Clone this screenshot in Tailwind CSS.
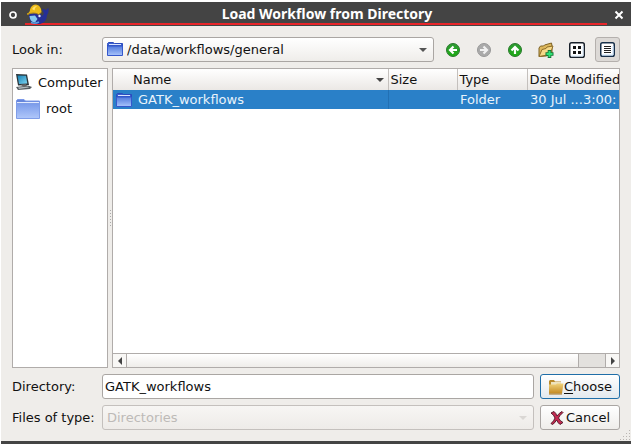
<!DOCTYPE html>
<html lang="en">
<head>
<meta charset="utf-8">
<title>Load Workflow from Directory</title>
<script src="https://cdn.jsdelivr.net/npm/@tailwindcss/browser@4"></script>
</head>
<body class="h-screen overflow-hidden bg-white px-px pt-0.5 pb-px font-['DejaVu_Sans',sans-serif] text-[13px] leading-4 text-[#111111]">
<svg class="absolute size-0" aria-hidden="true">
  <defs>
    <linearGradient id="blue" x1="0" y1="0" x2="0" y2="1"><stop offset="0" stop-color="#4f78dc"/><stop offset="1" stop-color="#a9c4fb"/></linearGradient>
    <linearGradient id="pale" x1="0" y1="0" x2="0" y2="1"><stop offset="0" stop-color="#7b9bea"/><stop offset="1" stop-color="#b0c7fa"/></linearGradient>
    <linearGradient id="green" x1="0" y1="0" x2="0" y2="1"><stop offset="0" stop-color="#2f9a35"/><stop offset="1" stop-color="#1cab12"/></linearGradient>
    <linearGradient id="gold" x1="0" y1="0" x2="0" y2="1"><stop offset="0" stop-color="#f0d27c"/><stop offset="1" stop-color="#c48a22"/></linearGradient>
    <linearGradient id="screen" x1="0" y1="0" x2="1" y2="1"><stop offset="0" stop-color="#1680b4"/><stop offset="1" stop-color="#7fd6f2"/></linearGradient>
    <symbol id="folder" viewBox="0 0 16 14"><path d="M.5 2.500V1.500L1.500.5H6L7.500 1.500H15.500V4H.5Z" fill="#3a5fd0" stroke="#2b4bbd"/><path d="M2 2.500H14" stroke="#d9e4ff"/><path d="M.5 4H15.500V13.500H.5Z" fill="url(#blue)" stroke="#3558cc"/></symbol>
  </defs>
</svg>
<main class="relative flex h-full flex-col border-b-[3px] border-[#444444] bg-[#efedea]">
  <header class="flex h-6 shrink-0 items-stretch bg-[#444444] text-white">
    <button class="flex w-6 items-center justify-center pt-0.5" aria-label="Window menu"><svg class="size-2.5" viewBox="0 0 10 10"><circle cx="5" cy="5" r="3" fill="none" stroke="#fff" stroke-width="1.700"/></svg></button>
    <div class="relative mb-px flex flex-1 items-center justify-center border-b-2 border-[#e8262a]">
      <svg class="absolute top-0.5 left-0.5 h-5 w-[22px]" viewBox="0 0 22 20"><path d="M2 9Q1 19 9 20H13Q20 18 20 11Q22 9 21.500 4Q20 4 19 6.500Q17 4 15.500 5Q15 7 17 9.500L15 12L13 9Z" fill="#252f96"/><path d="M2.500 12L8 11.500L10.500 15L8 18.500Q3 18 2.500 12Z" fill="#86c8ee"/><path d="M4 18.500Q8 20 12 18" fill="none" stroke="#5a9fdc" stroke-width="1.500"/><path d="M0 9.500Q3 8.500 3 5.500Q4.500.5 9 .5Q14 1 14.500 8L12 10.500Q7 8 0 11Z" fill="#ecba18"/><path d="M5 5Q7 1.500 10 2Q7.500 3.500 7.500 6.500Z" fill="#ffe26d"/><path d="M0 10.500Q7 7.500 11.500 10.500L14.500 8.500" fill="none" stroke="#95741a" stroke-width=".8"/><circle cx="12.500" cy="12" r="1.200" fill="#e6eefb"/></svg>
      <h1 class="pt-0.5 pl-[22px] font-['Noto_Sans',sans-serif] text-[14px] leading-4 font-bold">Load Workflow from Directory</h1>
    </div>
    <button class="flex w-6 items-center justify-center pt-0.5" aria-label="Close"><svg class="size-2.5" viewBox="0 0 10 10"><path d="M1.500 1.500L8.500 8.500M8.500 1.500L1.500 8.500" stroke="#fff" stroke-width="2"/></svg></button>
  </header>

  <div class="flex min-h-0 flex-1 flex-col gap-1.5 p-[11px]">
    <div class="flex h-[25px] shrink-0 items-center">
      <label for="look" class="w-[90px] shrink-0">Look in:</label>
      <div class="relative h-full flex-1">
        <select id="look" class="h-full w-full appearance-none rounded-[3px] border border-[#aaa6a3] bg-linear-to-b from-white to-[#efedea] pl-6"><option>/data/workflows/general</option></select>
        <svg class="pointer-events-none absolute top-[5px] left-[5px] h-3.5 w-4"><use href="#folder"/></svg>
        <svg class="pointer-events-none absolute top-[11px] right-[7px] h-1 w-2" viewBox="0 0 8 4"><path d="M0 0H8L4 4Z" fill="#555"/></svg>
      </div>
      <div class="ml-1.5 flex gap-1.5">
        <button class="flex size-[25px] items-center justify-center" aria-label="Back"><svg class="size-3.5" viewBox="0 0 14 14"><circle cx="7" cy="7" r="6.500" fill="url(#green)" stroke="#2b7a2e"/><path d="M7.500 3.500L4 7L7.500 10.500M4 7H11" fill="none" stroke="#fff" stroke-width="2.200"/></svg></button>
        <button class="flex size-[25px] items-center justify-center" aria-label="Forward"><svg class="size-3.5" viewBox="0 0 14 14"><circle cx="7" cy="7" r="6.500" fill="#aaa" stroke="#989898"/><path d="M6.500 3.500L10 7L6.500 10.500M10 7H3" fill="none" stroke="#f1f1f1" stroke-width="2.200"/></svg></button>
        <button class="flex size-[25px] items-center justify-center" aria-label="Parent directory"><svg class="size-3.5" viewBox="0 0 14 14"><circle cx="7" cy="7" r="6.500" fill="url(#green)" stroke="#2b7a2e"/><path d="M3.500 7.500L7 4L10.500 7.500M7 4V11" fill="none" stroke="#fff" stroke-width="2.200"/></svg></button>
        <button class="flex size-[25px] items-center justify-center" aria-label="Create new folder"><svg class="size-4" viewBox="0 0 16 16"><path d="M1 14.500L1 6L2.500 4H5.500L6.500 3L13.500 1L14 4V12L8 14Z" fill="#dcb65c" stroke="#7d6224"/><path d="M1 14.500L4 7.500L8 6.500L9 5L15 4L12 12.500Z" fill="#f5d888" stroke="#8d6d27"/><path d="M11.500 8V16M7.500 12H15.500" stroke="#147635" stroke-width="3.600"/><path d="M11.500 9V15M8.500 12H14.500" stroke="#2fe176" stroke-width="2"/></svg></button>
        <button class="flex size-[25px] items-center justify-center" aria-label="List view"><svg class="size-4" viewBox="0 0 16 16"><rect x=".75" y=".75" width="14.500" height="14.500" rx="1.800" fill="#fff" stroke="#18202a" stroke-width="1.500"/><path d="M2 14H14V4" fill="none" stroke="#d4e8fa"/><path d="M4 4H7V7H4ZM9 4H12V7H9ZM4 9H7V12H4ZM9 9H12V12H9Z" fill="#151515"/></svg></button>
        <button class="flex size-[25px] items-center justify-center rounded-[3px] border border-[#b4b0ad] bg-[#dcd9d6]" aria-label="Detail view" aria-pressed="true"><svg class="size-[15px]" viewBox="0 0 15 15"><rect x=".75" y=".75" width="13.500" height="13.500" rx="1.800" fill="#fff" stroke="#18304a" stroke-width="1.500"/><path d="M2 13H13V4" fill="none" stroke="#c4dffa"/><path d="M4 4.500H11M4 6.500H11M4 8.500H11M4 10.500H11" stroke="#222"/></svg></button>
      </div>
    </div>

    <div class="flex min-h-0 flex-1">
      <nav class="w-24 shrink-0 overflow-hidden border border-[#b0acaa] bg-white pt-0.5">
        <a href="#" class="flex h-[22px] items-center gap-1.5 pl-0.5"><svg class="h-4 w-[17px] shrink-0" viewBox="0 0 17 16"><path d="M1 0L12 .5L14 11L3 11.500Z" fill="#2a3338"/><path d="M2.500 1.500L11 1.800L12.300 9.500L4 10Z" fill="url(#screen)"/><path d="M6 10.500L11 10L12 12H7Z" fill="#666"/><path d="M1 13L13 11.500L17 13L15 15L3 16Z" fill="#555c60"/><path d="M3 13.500L13 12.500L14 13.500L4 15Z" fill="#b0b8bc"/></svg><span class="pt-px">Computer</span></a>
        <a href="#" class="mt-0.5 flex h-7 items-center gap-1.5 pl-[3px]"><svg class="h-5 w-6 shrink-0" viewBox="0 0 24 20"><path d="M.5 5V1.500L1.500.5H8L9.500 2H23.500V5Z" fill="#6686dc" stroke="#7b98e8"/><path d="M1 3.500H23" stroke="#e2eafe"/><path d="M.5 4.500H23.500V19.500H.5Z" fill="url(#pale)" stroke="#7f9de8"/></svg>root</a>
      </nav>
      <div class="flex w-1 shrink-0 flex-col items-center justify-center gap-0.5" role="separator" aria-orientation="vertical"><i class="size-px bg-[#aaa]"></i><i class="size-px bg-[#aaa]"></i><i class="size-px bg-[#aaa]"></i><i class="size-px bg-[#aaa]"></i><i class="size-px bg-[#aaa]"></i><i class="size-px bg-[#aaa]"></i></div>
      <section class="flex min-w-0 flex-1 flex-col border border-[#b0acaa] bg-white">
        <div class="min-h-0 flex-1 overflow-hidden">
          <table class="w-full table-fixed border-collapse whitespace-nowrap text-left">
            <colgroup><col><col class="w-[69px]"><col class="w-[70px]"><col class="w-[92px]"></colgroup>
            <thead>
              <tr class="h-[21px] bg-linear-to-b from-white to-[#ebe8e5]">
                <th class="border-r border-[#c4c0bd] p-0 pr-1 pl-5 font-normal"><div class="flex items-center justify-between">Name<svg class="h-1 w-2" viewBox="0 0 8 4"><path d="M0 0H8L4 4Z" fill="#444"/></svg></div></th>
                <th class="border-r border-[#c4c0bd] p-0 pl-0.5 font-normal">Size</th>
                <th class="border-r border-[#c4c0bd] p-0 pl-0.5 font-normal">Type</th>
                <th class="overflow-hidden p-0 pl-0.5 font-normal">Date Modified</th>
              </tr>
            </thead>
            <tbody>
              <tr class="h-[19px] bg-[#2a80c8] text-[#e9f3fb]">
                <td class="border-r border-[#2270b4] p-0 pl-[3px]"><div class="flex items-center gap-1.5"><svg class="h-3.5 w-4"><use href="#folder"/></svg>GATK_workflows</div></td>
                <td class="p-0"></td>
                <td class="p-0 pl-[3px]">Folder</td>
                <td class="overflow-hidden p-0 pl-[3px]">30 Jul ...3:00:</td>
              </tr>
            </tbody>
          </table>
        </div>
        <div class="flex h-3.5 shrink-0 border-t border-[#b0acaa] bg-[#e3e1de]">
          <button class="flex w-3.5 items-center justify-center border-r border-[#b0acaa] bg-[#f8f7f5]" aria-label="Scroll left"><svg class="h-2 w-1" viewBox="0 0 4 8"><path d="M4 0V8L0 4Z" fill="#444"/></svg></button>
          <div class="flex-1 border-r border-[#b0acaa] bg-linear-to-b from-white to-[#efedea]"></div>
          <div class="w-[26px]"></div>
          <button class="flex w-3.5 items-center justify-center border-l border-[#b0acaa] bg-[#f8f7f5]" aria-label="Scroll right"><svg class="h-2 w-1" viewBox="0 0 4 8"><path d="M0 0V8L4 4Z" fill="#444"/></svg></button>
        </div>
      </section>
    </div>

    <div class="flex h-[25px] shrink-0 items-center">
      <label for="dir" class="w-[90px] shrink-0">Directory:</label>
      <input id="dir" class="h-full min-w-0 flex-1 rounded-[3px] border border-[#aaa6a3] bg-white px-0.5" value="GATK_workflows">
      <button class="ml-1.5 flex h-full w-20 items-center justify-center rounded-[3px] border border-[#1f6ea8] bg-linear-to-b from-white to-[#e3e9ee]"><svg class="h-4 w-4" viewBox="0 0 16 16"><path d="M1 14V2L2 1H6L7 2.500H13V5" fill="#b98a2c"/><path d="M3 3H13V8H3Z" fill="#eee3bd"/><path d="M1 5.500H8L9 4.500H15.500L14 14.500H1Z" fill="url(#gold)"/><path d="M1 15H14" stroke="#a77318"/></svg><span><u class="underline-offset-2">C</u>hoose</span></button>
    </div>
    <div class="flex h-[25px] shrink-0 items-center">
      <label for="types" class="w-[90px] shrink-0 whitespace-nowrap">Files of type:</label>
      <div class="relative h-full flex-1">
        <select id="types" disabled class="h-full w-full appearance-none rounded-[3px] border border-[#c4c0bd] bg-linear-to-b from-[#f7f6f4] to-[#eeebe8] pl-1 text-[#bdbab7] opacity-100"><option>Directories</option></select>
        <svg class="pointer-events-none absolute top-[11px] right-[7px] h-1 w-2" viewBox="0 0 8 4"><path d="M0 0H8L4 4Z" fill="#dad7d4"/></svg>
      </div>
      <button class="ml-1.5 flex h-full w-20 items-center justify-center gap-0.5 rounded-[3px] border border-[#aaa6a3] bg-linear-to-b from-white to-[#efedea]"><svg class="h-3.5 w-3.5" viewBox="0 0 14 14"><path d="M1 2L4 .5Q6 2 7 5Q9 2 12 .5L13 1.500Q9 5 8.500 7Q10 10 13 11.500L10 13.500Q8 12 6.500 9Q5 12 2.500 13.500L1 12.500Q4 10 5 7Q4 4 1 2Z" fill="#c52a52" stroke="#481421" stroke-width=".9"/></svg>Cancel</button>
    </div>
  </div>
  <svg class="absolute right-0 bottom-0 size-3" viewBox="0 0 12 12" aria-hidden="true"><path d="M10 1h1v1h-1zM7 4h1v1H7zM10 4h1v1h-1zM4 7h1v1H4zM7 7h1v1H7zM10 7h1v1h-1zM1 10h1v1H1zM4 10h1v1H4zM7 10h1v1H7zM10 10h1v1h-1z" fill="#bab6b3"/></svg>
</main>
</body>
</html>
